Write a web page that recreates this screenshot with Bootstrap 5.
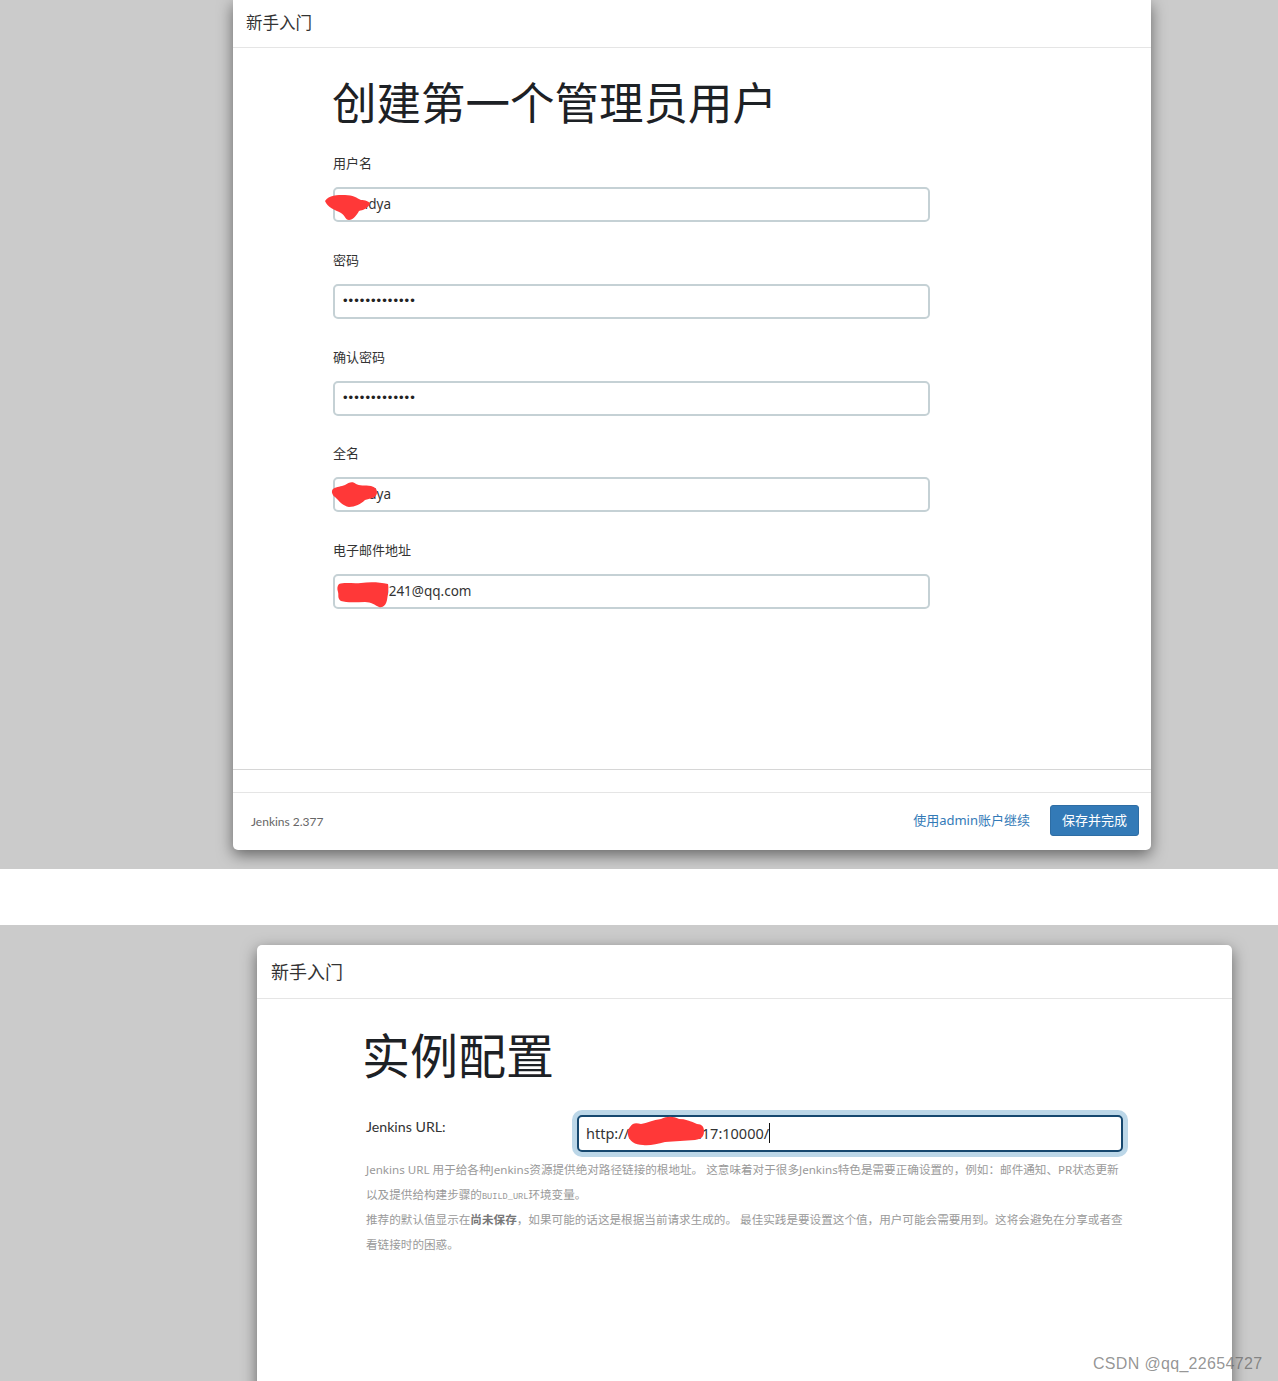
<!DOCTYPE html>
<html lang="zh-CN">

<head>
  <meta charset="UTF-8" />
  <title>新手入门</title>
  <meta name="viewport" content="width=device-width, initial-scale=1" />
  <link href="https://cdn.jsdelivr.net/npm/bootstrap@5.3.0/dist/css/bootstrap.min.css" rel="stylesheet" />
  <style>
    body {
      background-color: #fff;
      color: #212529;
      font-family: "Noto Sans", "Noto Sans CJK SC", sans-serif;
      overflow: hidden;
    }

    .shot {
      background-color: #cbcbcb;
      overflow: hidden;
    }

    .shot-one {
      height: 869px;
      padding-left: 233px;
      margin-bottom: 56px;
    }

    .shot-two {
      height: 456px;
      padding: 20px 0 0 257px;
    }

    .setup-dialog {
      background-color: #fff;
      border-radius: 5px;
      box-shadow: 0 5px 15px rgba(0, 0, 0, .5);
    }

    .shot-one .setup-dialog {
      width: 918px;
      height: 850px;
      border-radius: 0 0 5px 5px;
    }

    .shot-two .setup-dialog {
      width: 975px;
      height: 600px;
    }

    .dialog-head {
      height: 48px;
      padding: 12px 13px 0;
      border-bottom: 1px solid #e5e5e5;
      font-size: 16.5px;
      line-height: 22px;
      color: #333;
    }

    .shot-two .dialog-head {
      height: 54px;
      padding: 15px 14px 0;
      font-size: 18px;
      line-height: 24px;
    }

    .form-one {
      width: 597px;
      margin-left: 100px;
      height: 721px;
      padding-top: 27px;
    }

    .big-title {
      font-size: 44.5px;
      font-weight: 400;
      line-height: 56px;
      margin-bottom: 23px;
      margin-left: -1px;
      color: #1d2125;
    }

    .shot-two .big-title {
      font-size: 48px;
      line-height: 56px;
      margin-bottom: 31px;
      margin-left: -4px;
    }

    .field-label {
      display: block;
      font-size: 13px;
      line-height: 18px;
      margin-bottom: 15px;
      color: #333;
    }

    .field-row {
      margin-bottom: 28.75px;
    }

    .field-box {
      position: relative;
    }

    .field-input {
      height: 35px;
      padding: 0 8px 2px;
      border: 2px solid #c5d1d5;
      border-radius: 5px;
      font-size: 13.5px;
      color: #333;
      background-color: #fff;
    }

    .field-input[type=password] {
      font-family: "Liberation Sans", sans-serif;
      font-size: 13px;
      letter-spacing: 1.05px;
      color: #222;
    }

    .scribble {
      position: absolute;
      overflow: visible;
      left: 0;
      top: 0;
      pointer-events: none;
    }

    .line-one {
      height: 23px;
      border-top: 1px solid #d6d6d6;
    }

    .dialog-foot {
      height: 58px;
      border-top: 1px solid #e5e5e5;
      padding: 12px 12px 0 18px;
    }

    .version-text {
      font-family: Lato, "Noto Sans CJK SC", sans-serif;
      font-size: 12px;
      color: #666;
      padding-top: 8px;
    }

    .skip-link {
      color: #337ab7;
      font-size: 13px;
      text-decoration: none;
      line-height: 31px;
      margin-right: 20px;
    }

    .save-btn {
      width: 89px;
      height: 31px;
      padding: 0;
      font-size: 13px;
      background-color: #337ab7;
      border-color: #2e6da4;
      border-radius: 3px;
    }

    .form-two {
      margin-left: 109px;
      width: 756px;
      padding-top: 29px;
    }

    .url-row {
      margin-bottom: 4.5px;
    }

    .url-label {
      width: 211px;
      padding-top: 2px;
      font-family: Lato, "Noto Sans CJK SC", sans-serif;
      font-size: 14.2px;
      line-height: 20px;
      color: #333;
    }

    .url-input {
      width: 546px;
      height: 37px;
      margin-right: -1px;
      padding: 5.5px 7px;
      border: 2px solid #16486f;
      border-radius: 5px;
      box-shadow: 0 0 0 5px #bcd7e8;
      font-size: 14.5px;
      line-height: 20px;
      color: #333;
      background-color: #fff;
    }

    .url-caret {
      border-right: 1px solid #111;
    }

    .help-text {
      font-size: 11.6px;
      line-height: 25px;
      color: #9a9a9a;
      margin: 0;
      white-space: nowrap;
    }

    .help-text code {
      font-family: "Liberation Mono", monospace;
      font-size: 8.6px;
      line-height: 0;
      color: inherit;
    }

    .help-text b {
      color: #777;
    }

    .mark-text {
      position: absolute;
      left: 1093px;
      top: 1353px;
      font-family: "Liberation Sans", sans-serif;
      font-size: 16px;
      line-height: 22px;
      letter-spacing: .32px;
      color: rgba(90, 90, 90, .65);
    }
  </style>
</head>

<body>
  <div class="shot shot-one">
    <div class="setup-dialog">
      <div class="dialog-head">新手入门</div>
      <div class="form-one">
        <h1 class="big-title">创建第一个管理员用户</h1>
        <div class="field-row">
          <label class="field-label">用户名</label>
          <div class="field-box">
            <input class="form-control field-input" type="text" value="mmdya" />
            <svg class="scribble" width="10" height="10">
              <path fill="#ff3838" d="M-8 14C-4 8 4 8 12 8C20 8 24 11 28 13C32 13 36 14 37 17C34 22 30 23 26 24C24 28 20 33 16 33C12 33 12 28 8 26C2 23 -6 20 -8 14Z" />
            </svg>
          </div>
        </div>
        <div class="field-row">
          <label class="field-label">密码</label>
          <input class="form-control field-input" type="password" value="1234567890123" />
        </div>
        <div class="field-row">
          <label class="field-label">确认密码</label>
          <input class="form-control field-input" type="password" value="1234567890123" />
        </div>
        <div class="field-row">
          <label class="field-label">全名</label>
          <div class="field-box">
            <input class="form-control field-input" type="text" value="mmdya" />
            <svg class="scribble" width="10" height="10">
              <path fill="#ff3838" d="M0 12C4 9 8 10 12 8C16 5 20 4 23 7C26 9 32 8 38 9C42 10 44 12 44 15C44 20 40 21 32 23C28 27 22 30 16 30C10 29 6 24 2 20C-1 18 -2 14 0 12Z" />
            </svg>
          </div>
        </div>
        <div class="field-row">
          <label class="field-label">电子邮件地址</label>
          <div class="field-box">
            <input class="form-control field-input" type="text" value="xxxooo241@qq.com" />
            <svg class="scribble" width="10" height="10">
              <path fill="#ff3838" d="M6 10C12 8 20 10 28 9C36 8 46 8 55 10C56 14 55 20 54 26C53 31 50 34 46 33C42 31 38 28 32 28C24 28 14 29 8 27C4 24 6 21 5 18C4 15 4 12 6 10Z" />
            </svg>
          </div>
        </div>
      </div>
      <div class="line-one"></div>
      <div class="dialog-foot d-flex justify-content-between">
        <div class="version-text">Jenkins 2.377</div>
        <div class="d-flex align-items-start">
          <a class="skip-link" href="#">使用admin账户继续</a>
          <button class="btn btn-primary save-btn" type="button">保存并完成</button>
        </div>
      </div>
    </div>
  </div>

  <div class="shot shot-two">
    <div class="setup-dialog">
      <div class="dialog-head">新手入门</div>
      <div class="form-two">
        <h1 class="big-title">实例配置</h1>
        <div class="d-flex url-row">
          <div class="url-label">Jenkins URL:</div>
          <div class="field-box">
            <div class="url-input"><span class="url-caret">http://xxxxxxxxxi17:10000/</span></div>
            <svg class="scribble" width="10" height="10">
              <path fill="#ff3838" d="M53 12C56 7 60 8 64 9C70 8 76 5 84 4C90 1 96 1 102 4C108 4 114 6 120 9C125 9 127 12 127 16C127 22 124 24 118 25C108 26 98 26 88 27C80 29 72 31 66 30C58 30 52 26 51 20C50 17 51 14 53 12Z" />
            </svg>
          </div>
        </div>
        <p class="help-text">Jenkins URL 用于给各种Jenkins资源提供绝对路径链接的根地址。 这意味着对于很多Jenkins特色是需要正确设置的，例如：邮件通知、PR状态更新<br />以及提供给构建步骤的<code>BUILD_URL</code>环境变量。<br />推荐的默认值显示在<b>尚未保存</b>，如果可能的话这是根据当前请求生成的。 最佳实践是要设置这个值，用户可能会需要用到。这将会避免在分享或者查<br />看链接时的困惑。</p>
      </div>
    </div>
  </div>

  <div class="mark-text">CSDN @qq_22654727</div>

  <script src="https://cdn.jsdelivr.net/npm/bootstrap@5.3.0/dist/js/bootstrap.bundle.min.js"></script>
</body>

</html>
